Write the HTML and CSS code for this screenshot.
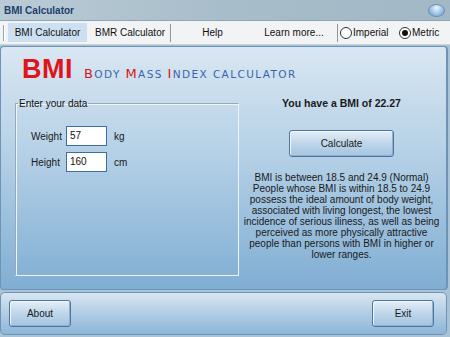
FILE: index.html
```html
<!DOCTYPE html>
<html>
<head>
<meta charset="utf-8">
<link rel="stylesheet" href="styles.css">
</head>
<body>
<div class="window">
  <div class="titlebar">
    <span class="title">BMI Calculator</span>
    <span class="close"></span>
  </div>
  <div class="menubar">
    <span class="grip"></span>
    <span class="tab active">BMI Calculator</span>
    <span class="tab bmr">BMR Calculator</span>
    <span class="sep"></span>
    <span class="tab help">Help</span>
    <span class="tab learn">Learn more...</span>
    <span class="sep"></span>
    <span class="radio imperial"><span class="dot"></span>Imperial</span>
    <span class="radio checked"><span class="dot"></span>Metric</span>
  </div>
  <div class="main">
    <div class="heading">
      <span class="big">BMI</span>
      <span class="sub"><b>B</b>ODY <b>M</b>ASS <b>I</b>NDEX CALCULATOR</span>
    </div>
    <div class="content">
      <fieldset class="group">
        <legend>Enter your data</legend>
        <div class="row"><label>Weight</label><span class="input">57</span><span class="unit">kg</span></div>
        <div class="row"><label>Height</label><span class="input">160</span><span class="unit">cm</span></div>
      </fieldset>
      <div class="result">
        <div class="score">You have a BMI of 22.27</div>
        <div class="btn calc">Calculate</div>
        <p class="desc">BMI is between 18.5 and 24.9 (Normal)<br>People whose BMI is within 18.5 to 24.9<br>possess the ideal amount of body weight,<br>associated with living longest, the lowest<br>incidence of serious iliness, as well as being<br>perceived as more physically attractive<br>people than persons with BMI in higher or<br>lower ranges.</p>
      </div>
    </div>
  </div>
  <div class="footer">
    <div class="btn">About</div>
    <div class="btn">Exit</div>
  </div>
</div>
</body>
</html>
```
FILE: styles.css
```css
* { box-sizing: border-box; }
html, body { margin: 0; padding: 0; }
body {
  width: 450px; height: 337px; overflow: hidden;
  font-family: "Liberation Sans", Arial, sans-serif;
  font-size: 10px; color: #1a1a1a;
  background: #a9c2d6;
  white-space: nowrap;
}
.window { width: 450px; height: 337px; display: flex; flex-direction: column; }
.titlebar {
  height: 21px; display: flex; align-items: center; justify-content: space-between;
  padding: 0 5px 0 4px;
  background: linear-gradient(90deg, #b9cbd6, #a8bdca 50%, #a2b8c6);
  border-bottom: 1px solid #8fa5b5;
}
.title { font-weight: bold; font-size: 10px; color: #1f3f6b; }
.close {
  width: 17px; height: 13px; border-radius: 50%;
  background: radial-gradient(ellipse at 50% 25%, #eef6fc, #9cc4e6 55%, #5f93c2);
  border: 1px solid #6d8fae;
}
.menubar {
  height: 24px; display: flex; align-items: center;
  background: #f1f3f4; border-bottom: 1px solid #c9d3da;
  padding-left: 3px;
}
.grip { width: 2px; height: 16px; border-left: 1px solid #9aa6ae; border-right: 1px solid #fff; margin-right: 3px; }
.tab { height: 19px; line-height: 19px; color: #111; }
.tab.active { background: #cde0f1; width: 79px; text-align: center; }
.tab.bmr { width: 80px; padding-left: 8px; }
.tab.help { width: 83px; text-align: center; }
.tab.learn { width: 80px; text-align: center; }
.sep { width: 1px; height: 18px; background: #8d979e; margin-left: 3px; }
.radio { display: flex; align-items: center; gap: 1px; margin-left: 2px; color: #111; }
.radio.imperial { width: 57px; }
.dot { width: 12px; height: 12px; border-radius: 50%; border: 1px solid #333; background: #fff; position: relative; }
.radio.checked .dot::after { content: ""; position: absolute; left: 2px; top: 2px; width: 6px; height: 6px; border-radius: 50%; background: #111; }
.main {
  height: 244px; margin: 1px 2px 0 0;
  border: 1px solid #6e93b4; border-right-width: 2px; border-radius: 4px;
  background: linear-gradient(#d9e7f2, #b4d0e6 45%, #80aed3);
  display: flex; flex-direction: column;
}
.heading { display: flex; align-items: baseline; padding: 8px 0 0 21px; height: 40px; }
.big { font-weight: bold; font-size: 27px; color: #e0141b; letter-spacing: 0.5px; line-height: 28px; }
.sub { font-family: "DejaVu Sans", sans-serif; font-size: 10.5px; color: #3765ad; margin-left: 11px; letter-spacing: 1.4px; }
.sub b { font-weight: normal; color: #d8141a; font-size: 13px; }
.content { display: flex; flex: 1; }
.group {
  flex-shrink: 0;
  margin: 11px 0 13px 14px; padding: 17px 0 0 15px; width: 224px;
  border: 1px solid #98a9b6; border-right-color: #eef4f8; border-bottom-color: #eef4f8;
  box-shadow: inset 1px 1px 0 #eef4f8;
  display: flex; flex-direction: column; gap: 6px;
}
legend { padding: 0 1px; margin-left: -13px; color: #111; }
.row { display: flex; align-items: center; }
.row label { width: 35px; }
.input {
  width: 41px; height: 20px; background: #fff; border: 1px solid #3a6ea5;
  padding: 3px 0 0 3px; color: #111;
}
.unit { margin-left: 7px; }
.result { flex: 1; display: flex; flex-direction: column; align-items: center; padding-top: 10px; padding-right: 2px; }
.score { font-weight: bold; font-size: 10.5px; }
.btn {
  width: 62px; height: 27px; display: flex; align-items: center; justify-content: center;
  border: 1px solid #4f74a0; border-radius: 3px;
  background: linear-gradient(#e4eef7, #bed6ea 50%, #a4c4e0);
  box-shadow: inset 1px 1px 0 #f2f7fb, inset -1px -1px 0 #8fb1d1;
  color: #1a1a1a;
}
.btn.calc { width: 105px; margin-top: 21px; }
.desc { margin: 15px 0 0 0; text-align: center; line-height: 11px; }
.footer {
  flex: 1; margin: 2px 3px 2px 0;
  border: 1px solid #6e93b4; border-radius: 5px;
  background: linear-gradient(#d8e6f1, #a9c8e2 60%, #8db6d8);
  display: flex; justify-content: space-between; align-items: center;
  padding: 0 12px 0 8px;
}
```
